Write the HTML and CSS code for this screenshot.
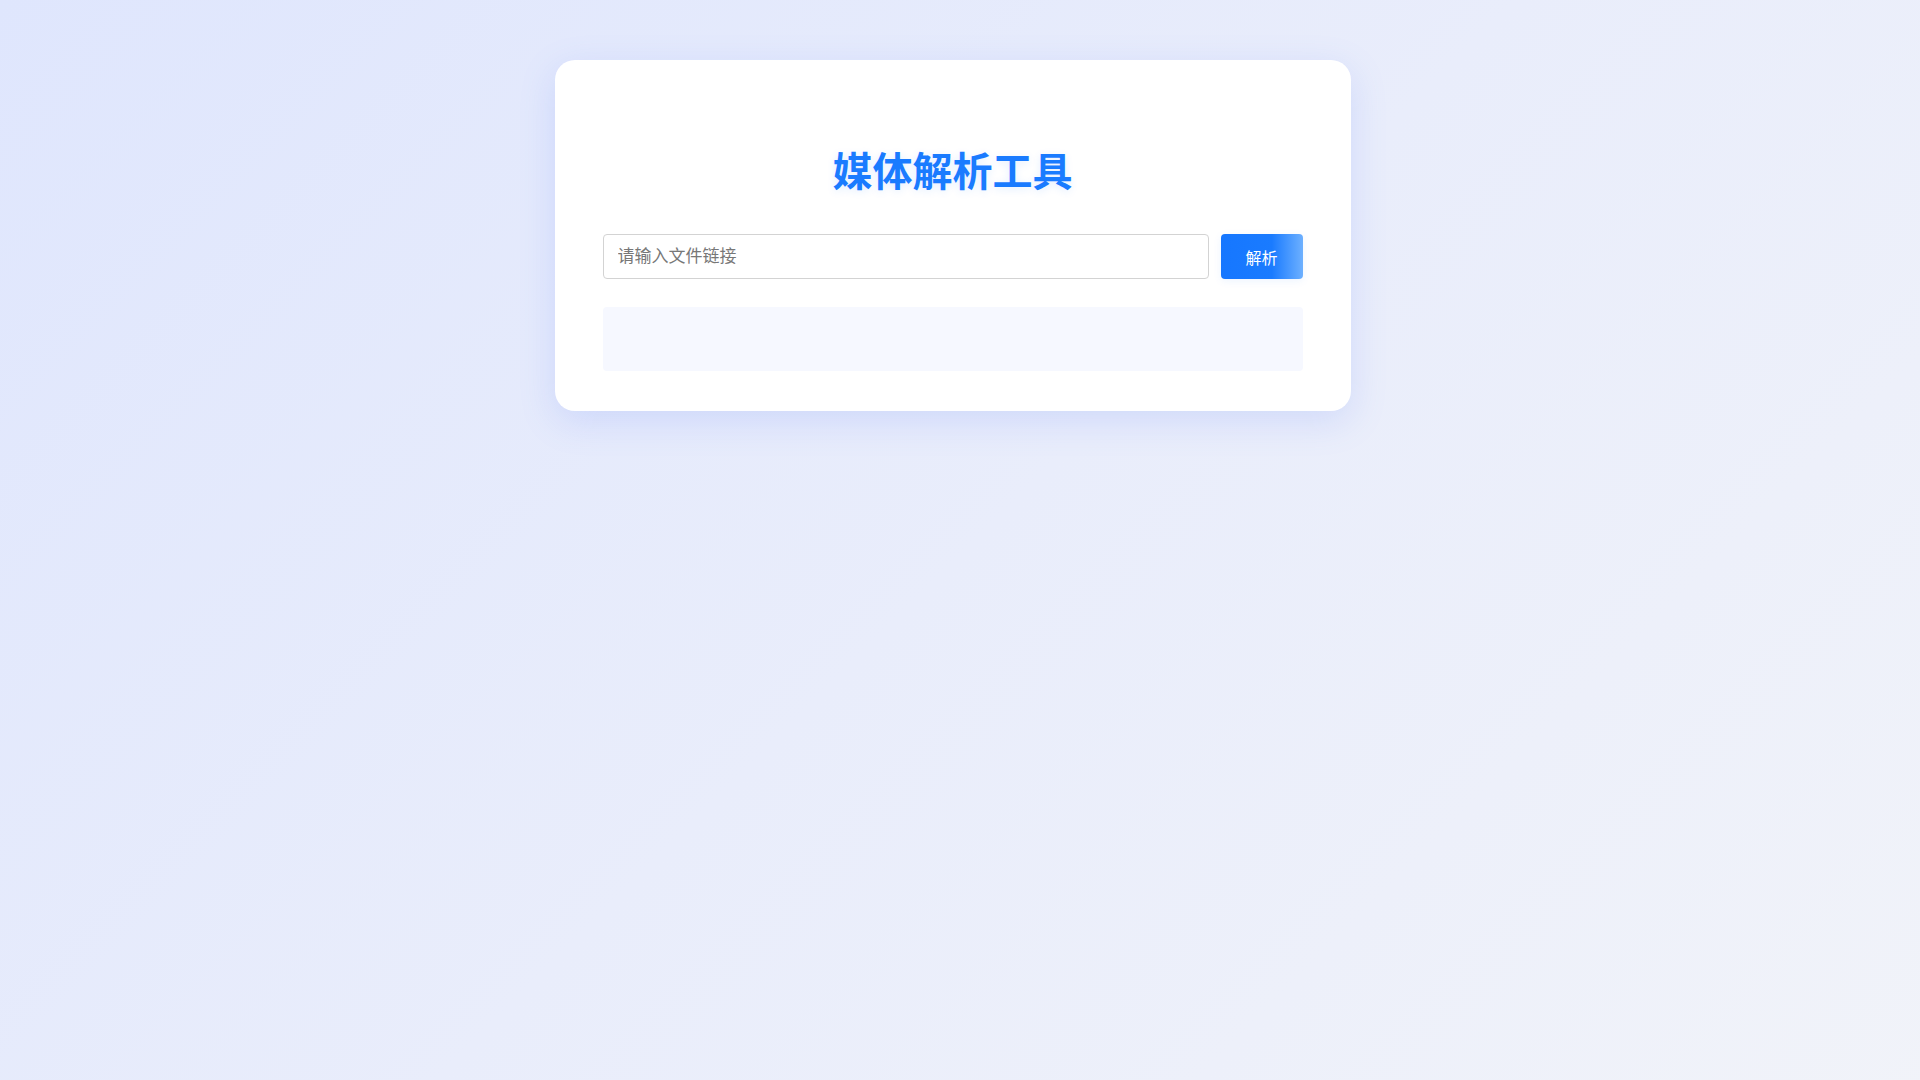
FILE: index.html
```html
<!DOCTYPE html>
<html lang="zh-CN">
<head>
<meta charset="utf-8">
<title>媒体解析工具</title>
<link rel="stylesheet" href="styles.css">
</head>
<body>
<main class="card">
  <h1 class="title">媒体解析工具</h1>
  <div class="input-row">
    <input class="url-input" type="text" placeholder="请输入文件链接">
    <button class="parse-btn" type="button">解析</button>
  </div>
  <div class="result"></div>
</main>
</body>
</html>
```

FILE: styles.css
```css
html {
  min-height: 100%;
}
body {
  margin: 0;
  padding: 20px 35px 20px 20px;
  min-height: 100vh;
  background: linear-gradient(135deg, #dfe6fd 0%, #e9edfb 50%, #f1f3f9 100%);
  font-family: "Noto Sans CJK SC", "Noto Sans", sans-serif;
}
.card {
  width: 700px;
  margin: 40px auto 0;
  padding: 48px 48px 40px;
  background: #ffffff;
  border-radius: 20px;
  box-shadow: 0 10px 36px rgba(96, 125, 250, 0.18);
}
.title {
  margin: 37px 0 41px;
  font-size: 40px;
  line-height: 48px;
  font-weight: 700;
  text-align: center;
  color: #1a7bff;
  text-shadow: 0 2px 8px rgba(22, 119, 255, 0.12);
}
.input-row {
  display: flex;
  gap: 12px;
  height: 45px;
}
.url-input {
  flex: 1;
  box-sizing: border-box;
  height: 45px;
  padding: 0 14px 4px;
  border: 1px solid #d3d3d3;
  border-radius: 4px;
  font-family: "Noto Sans CJK SC", "Noto Sans", sans-serif;
  font-size: 17px;
  color: #333;
  outline: none;
}
.url-input::placeholder {
  color: #777;
}
.parse-btn {
  width: 82px;
  height: 45px;
  border: none;
  border-radius: 4px;
  background: linear-gradient(90deg, #1677ff 0%, #1a7bff 62%, #6db0ff 100%);
  color: #ffffff;
  font-family: "Noto Sans CJK SC", "Noto Sans", sans-serif;
  font-size: 16px;
  cursor: pointer;
  box-shadow: 0 2px 8px rgba(22, 119, 255, 0.08);
}
.result {
  margin-top: 28px;
  height: 64px;
  border-radius: 4px;
  background: #f6f8ff;
}
```
